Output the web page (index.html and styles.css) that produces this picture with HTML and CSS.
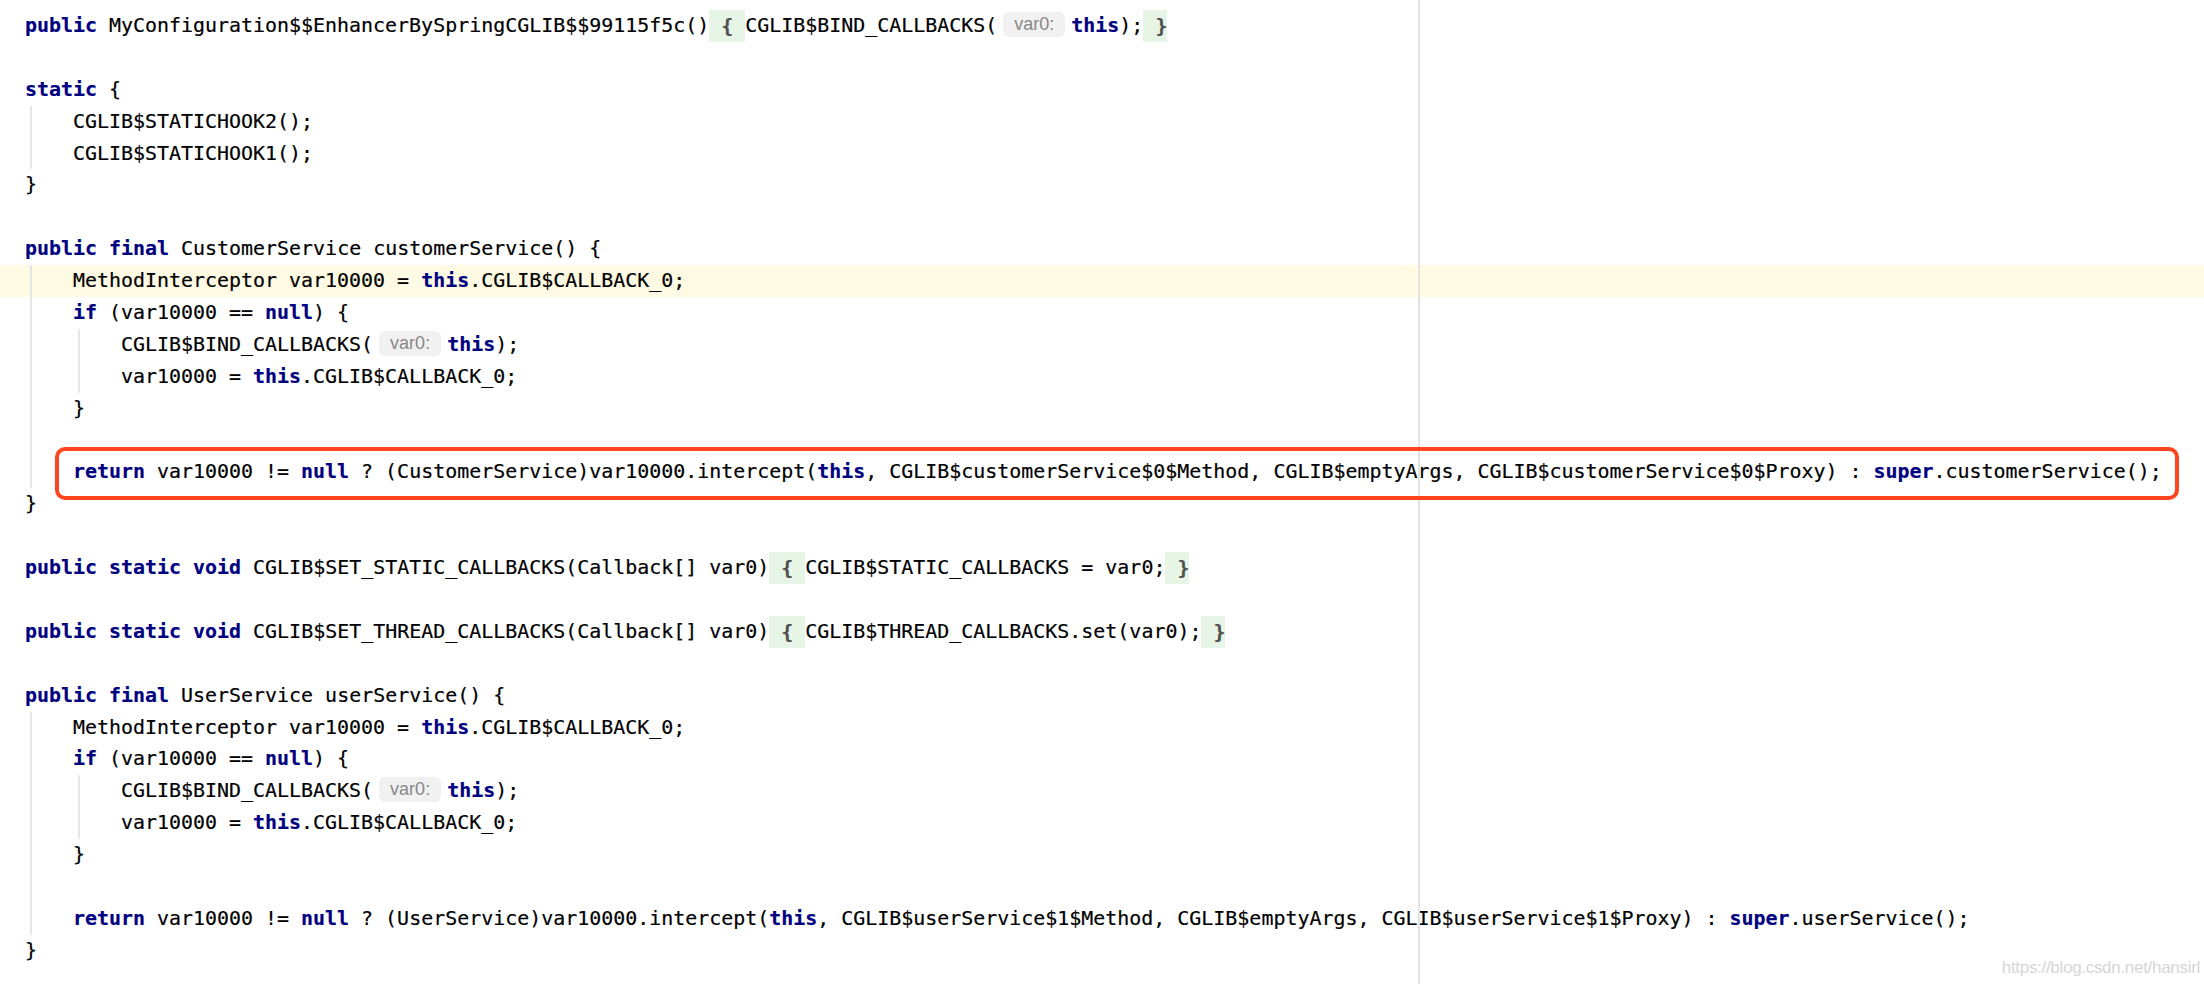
FILE: index.html
```html
<!DOCTYPE html>
<html>
<head>
<meta charset="utf-8">
<link rel="stylesheet" href="styles.css">
</head>
<body>
<div class="editor">
  <div class="margin-guide"></div>
  <div class="code">
    <div class="line"><span class="k">public</span> MyConfiguration$$EnhancerBySpringCGLIB$$99115f5c()<span class="fold"> { </span>CGLIB$BIND_CALLBACKS(<span class="hint">var0:</span><span class="k">this</span>);<span class="fold"> }</span></div>
    <div class="line"></div>
    <div class="line"><span class="k">static</span> {</div>
    <div class="line g1">    CGLIB$STATICHOOK2();</div>
    <div class="line g1">    CGLIB$STATICHOOK1();</div>
    <div class="line">}</div>
    <div class="line"></div>
    <div class="line"><span class="k">public</span> <span class="k">final</span> CustomerService customerService() {</div>
    <div class="line g1 caret">    MethodInterceptor var10000 = <span class="k">this</span>.CGLIB$CALLBACK_0;</div>
    <div class="line g1">    <span class="k">if</span> (var10000 == <span class="k">null</span>) {</div>
    <div class="line g2">        CGLIB$BIND_CALLBACKS(<span class="hint">var0:</span><span class="k">this</span>);</div>
    <div class="line g2">        var10000 = <span class="k">this</span>.CGLIB$CALLBACK_0;</div>
    <div class="line g1">    }</div>
    <div class="line g1"></div>
    <div class="line g1 marked">    <span class="k">return</span> var10000 != <span class="k">null</span> ? (CustomerService)var10000.intercept(<span class="k">this</span>, CGLIB$customerService$0$Method, CGLIB$emptyArgs, CGLIB$customerService$0$Proxy) : <span class="k">super</span>.customerService();<span class="red-box"></span></div>
    <div class="line">}</div>
    <div class="line"></div>
    <div class="line"><span class="k">public</span> <span class="k">static</span> <span class="k">void</span> CGLIB$SET_STATIC_CALLBACKS(Callback[] var0)<span class="fold"> { </span>CGLIB$STATIC_CALLBACKS = var0;<span class="fold"> }</span></div>
    <div class="line"></div>
    <div class="line"><span class="k">public</span> <span class="k">static</span> <span class="k">void</span> CGLIB$SET_THREAD_CALLBACKS(Callback[] var0)<span class="fold"> { </span>CGLIB$THREAD_CALLBACKS.set(var0);<span class="fold"> }</span></div>
    <div class="line"></div>
    <div class="line"><span class="k">public</span> <span class="k">final</span> UserService userService() {</div>
    <div class="line g1">    MethodInterceptor var10000 = <span class="k">this</span>.CGLIB$CALLBACK_0;</div>
    <div class="line g1">    <span class="k">if</span> (var10000 == <span class="k">null</span>) {</div>
    <div class="line g2">        CGLIB$BIND_CALLBACKS(<span class="hint">var0:</span><span class="k">this</span>);</div>
    <div class="line g2">        var10000 = <span class="k">this</span>.CGLIB$CALLBACK_0;</div>
    <div class="line g1">    }</div>
    <div class="line g1"></div>
    <div class="line g1">    <span class="k">return</span> var10000 != <span class="k">null</span> ? (UserService)var10000.intercept(<span class="k">this</span>, CGLIB$userService$1$Method, CGLIB$emptyArgs, CGLIB$userService$1$Proxy) : <span class="k">super</span>.userService();</div>
    <div class="line">}</div>
  </div>
  <div class="watermark">https://blog.csdn.net/hansirl</div>
</div>
</body>
</html>
```
FILE: styles.css
```css
html, body {
  margin: 0;
  padding: 0;
  background: #ffffff;
  overflow: hidden;
}

.editor {
  position: relative;
  width: 2204px;
  height: 984px;
  background: #ffffff;
}

.code {
  padding-top: 10px;
  font-family: "DejaVu Sans Mono", monospace;
  font-size: 19.96px;
  color: #000000;
  -webkit-text-stroke: 0.2px currentColor;
}

.line {
  position: relative;
  height: 31.9px;
  line-height: 31.9px;
  padding-left: 25px;
  white-space: pre;
}

.k {
  color: #000080;
  font-weight: bold;
}

.g1 {
  background-image: linear-gradient(#e6e6e6, #e6e6e6);
  background-size: 2px 100%;
  background-position: 30px 0;
  background-repeat: no-repeat;
}

.g2 {
  background-image: linear-gradient(#e6e6e6, #e6e6e6), linear-gradient(#e6e6e6, #e6e6e6);
  background-size: 2px 100%, 2px 100%;
  background-position: 30px 0, 78px 0;
  background-repeat: no-repeat;
}

.caret {
  background-color: #fffae3;
}

.fold {
  display: inline-block;
  height: 32px;
  line-height: 32px;
  vertical-align: top;
  background: #e7f5e7;
  color: #505050;
  font-weight: bold;
}

.hint {
  display: inline-block;
  height: 25px;
  line-height: 25px;
  vertical-align: middle;
  margin: 0 6px;
  padding: 0 11px;
  border-radius: 6px;
  background: #f1f1f1;
  color: #888888;
  font-family: "Liberation Sans", "DejaVu Sans", sans-serif;
  font-size: 18px;
  font-weight: normal;
  -webkit-text-stroke: 0;
  position: relative;
  top: -2px;
}

.red-box {
  position: absolute;
  left: 55px;
  right: 25px;
  top: -9px;
  height: 53px;
  box-sizing: border-box;
  border: 4px solid #ff4520;
  border-radius: 10px;
  z-index: 2;
}

.margin-guide {
  position: absolute;
  left: 1418px;
  top: 0;
  bottom: 0;
  width: 2px;
  background: #e2e2e2;
  z-index: 1;
}

.watermark {
  position: absolute;
  right: 4px;
  bottom: 6px;
  font-family: "Liberation Sans", "DejaVu Sans", sans-serif;
  font-size: 17px;
  color: #d6d6d6;
  letter-spacing: -0.3px;
}
```
